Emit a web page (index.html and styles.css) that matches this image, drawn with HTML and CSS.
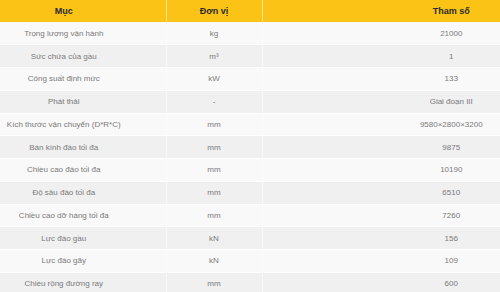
FILE: index.html
```html
<!DOCTYPE html>
<html lang="vi">
<head>
    <meta charset="UTF-8">
    <title>Thông số kỹ thuật</title>
    <link rel="stylesheet" href="styles.css">
</head>
<body>
<table class="spec">
    <thead>
        <tr>
            <th class="c1">Mục</th>
            <th class="c2">Đơn vị</th>
            <th class="c3">Tham số</th>
        </tr>
    </thead>
    <tbody>
        <tr><td class="c1">Trọng lượng vận hành</td><td class="c2">kg</td><td class="c3">21000</td></tr>
        <tr><td class="c1">Sức chứa của gầu</td><td class="c2">m³</td><td class="c3">1</td></tr>
        <tr><td class="c1">Công suất định mức</td><td class="c2">kW</td><td class="c3">133</td></tr>
        <tr><td class="c1">Phát thải</td><td class="c2">-</td><td class="c3">Giai đoạn III</td></tr>
        <tr><td class="c1">Kích thước vận chuyển (D*R*C)</td><td class="c2">mm</td><td class="c3">9580×2800×3200</td></tr>
        <tr><td class="c1">Bán kính đào tối đa</td><td class="c2">mm</td><td class="c3">9875</td></tr>
        <tr><td class="c1">Chiều cao đào tối đa</td><td class="c2">mm</td><td class="c3">10190</td></tr>
        <tr><td class="c1">Độ sâu đào tối đa</td><td class="c2">mm</td><td class="c3">6510</td></tr>
        <tr><td class="c1">Chiều cao dỡ hàng tối đa</td><td class="c2">mm</td><td class="c3">7260</td></tr>
        <tr><td class="c1">Lực đào gầu</td><td class="c2">kN</td><td class="c3">156</td></tr>
        <tr><td class="c1">Lực đào gãy</td><td class="c2">kN</td><td class="c3">109</td></tr>
        <tr><td class="c1">Chiều rộng đường ray</td><td class="c2">mm</td><td class="c3">600</td></tr>
    </tbody>
</table>
</body>
</html>
```

FILE: styles.css
```css
*{
    margin:0;
    padding:0;
    box-sizing:border-box;
}
body{
    font-family:"Liberation Sans", Arial, sans-serif;
    background:#fff;
    overflow:hidden;
}
.spec{
    width:500px;
    border-collapse:collapse;
    table-layout:fixed;
}
.spec th,.spec td{
    text-align:center;
    vertical-align:middle;
    border-left:1px solid rgba(255,255,255,.55);
    white-space:nowrap;
}
.spec th:first-child,.spec td:first-child{
    border-left:none;
}
.spec th{
    height:22px;
    background:#fbc316;
    color:#2b2b2b;
    font-size:9px;
    font-weight:bold;
}
.spec td{
    height:22.75px;
    color:#7a7a7a;
    font-size:8px;
    border-top:1px solid #fff;
}
.spec tbody tr:nth-child(odd) td{
    background:#f9f9f9;
}
.spec tbody tr:nth-child(even) td{
    background:#f0f0f0;
}
.spec .c1{
    width:166px;
    padding-right:38px;
}
.spec .c2{
    width:96px;
}
.spec .c3{
    width:238px;
    padding-left:140px;
}
```
